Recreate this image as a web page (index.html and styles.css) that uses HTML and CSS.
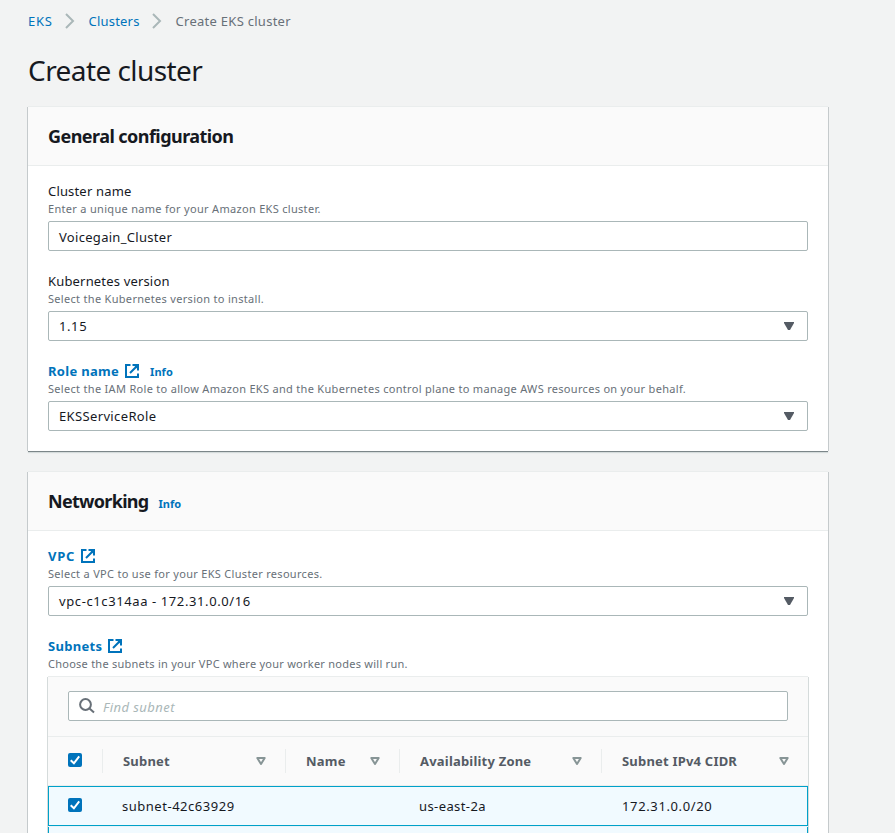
FILE: index.html
```html
<!DOCTYPE html>
<html lang="en">
<head>
<meta charset="utf-8">
<title>Create EKS cluster</title>
<link rel="stylesheet" href="styles.css">
</head>
<body>
<svg class="defs" aria-hidden="true">
  <symbol id="external" viewBox="0 0 16 16"><path d="M6.5 2H2v12h12v-3.5M12.5 3.5L6 10" fill="none" stroke="currentColor" stroke-width="2"/><path d="M8.5 1H15v6.5H13V5.5L10.5 3H8.5Z" fill="currentColor"/></symbol>
  <symbol id="chevron" viewBox="0 0 10 16"><path d="M1 1l7 7-7 7" fill="none" stroke="currentColor" stroke-width="2"/></symbol>
  <symbol id="caret" viewBox="0 0 10 8"><path d="M0 0H10V1L6 8H4L0 1Z" fill="currentColor"/></symbol>
  <symbol id="sort" viewBox="0 0 10 8"><path d="M1.3 1H8.7L5 7Z" fill="none" stroke="currentColor" stroke-width="2" stroke-linejoin="round"/></symbol>
  <symbol id="search" viewBox="0 0 16 16"><circle cx="6.5" cy="6.5" r="5.4" fill="none" stroke="currentColor" stroke-width="2"/><path d="M10.5 10.5l4.5 4" fill="none" stroke="currentColor" stroke-width="2"/></symbol>
  <symbol id="check" viewBox="0 0 14 14"><path d="M2.7 7.3l3.2 3L11.2 3.4" fill="none" stroke="#fff" stroke-width="2"/></symbol>
</svg>
<main class="page">
  <nav class="breadcrumbs">
    <a class="crumb-eks">EKS</a><svg class="chevron"><use href="#chevron"/></svg><a class="crumb-clusters">Clusters</a><svg class="chevron"><use href="#chevron"/></svg><span class="crumb-current">Create EKS cluster</span>
  </nav>
  <h1>Create cluster</h1>

  <section class="card">
    <header class="card-header"><h2>General configuration</h2></header>
    <div class="card-body">
      <div class="field">
        <div class="label">Cluster name</div>
        <div class="hint">Enter a unique name for your Amazon EKS cluster.</div>
        <div class="control">Voicegain_Cluster</div>
      </div>
      <div class="field">
        <div class="label">Kubernetes version</div>
        <div class="hint">Select the Kubernetes version to install.</div>
        <div class="control select numeric">1.15<svg class="caret"><use href="#caret"/></svg></div>
      </div>
      <div class="field">
        <div class="label link">Role name<svg class="external"><use href="#external"/></svg><a class="info">Info</a></div>
        <div class="hint">Select the IAM Role to allow Amazon EKS and the Kubernetes control plane to manage AWS resources on your behalf.</div>
        <div class="control select">EKSServiceRole<svg class="caret"><use href="#caret"/></svg></div>
      </div>
    </div>
  </section>

  <section class="card">
    <header class="card-header"><h2 class="networking">Networking</h2><a class="info">Info</a></header>
    <div class="card-body">
      <div class="field">
        <div class="label link vpc">VPC<svg class="external"><use href="#external"/></svg></div>
        <div class="hint">Select a VPC to use for your EKS Cluster resources.</div>
        <div class="control select numeric">vpc-c1c314aa - 172.31.0.0/16<svg class="caret"><use href="#caret"/></svg></div>
      </div>
      <div class="field">
        <div class="label link">Subnets<svg class="external"><use href="#external"/></svg></div>
        <div class="hint subnets-hint">Choose the subnets in your VPC where your worker nodes will run.</div>
        <div class="table">
          <div class="toolbar">
            <div class="control search"><svg class="magnifier"><use href="#search"/></svg><span class="placeholder">Find subnet</span></div>
          </div>
          <div class="row head">
            <div class="cell pick"><svg class="checkbox"><use href="#check"/></svg></div>
            <div class="cell">Subnet<svg class="sort"><use href="#sort"/></svg></div>
            <div class="cell">Name<svg class="sort"><use href="#sort"/></svg></div>
            <div class="cell">Availability Zone<svg class="sort"><use href="#sort"/></svg></div>
            <div class="cell">Subnet IPv4 CIDR<svg class="sort"><use href="#sort"/></svg></div>
          </div>
          <div class="row selected">
            <div class="cell pick"><svg class="checkbox"><use href="#check"/></svg></div>
            <div class="cell">subnet-42c63929</div>
            <div class="cell"></div>
            <div class="cell zone">us-east-2a</div>
            <div class="cell cidr">172.31.0.0/20</div>
          </div>
          <div class="row selected next"></div>
        </div>
      </div>
    </div>
  </section>
</main>
</body>
</html>
```
FILE: styles.css
```css
* { box-sizing: border-box; }
html { height: 100%; overflow: hidden; background: #fff; }
body {
  height: 833px;
  overflow: hidden;
  margin: 0;
  background: #f2f3f3;
  color: #16191f;
  font: 13px/20px "Noto Sans", sans-serif;
  letter-spacing: .3px;
}
svg { display: block; flex: none; }
.defs { position: absolute; width: 0; height: 0; }
.page { width: 804px; height: 833px; padding: 11px 2px 0; margin-left: 26px; overflow: hidden; }
.breadcrumbs { display: flex; align-items: center; height: 20px; color: #687078; }
.breadcrumbs a, .link, .info { color: #0073bb; }
.crumb-eks { letter-spacing: .7px; }
.crumb-clusters { letter-spacing: .2px; }
.chevron { width: 10px; height: 16px; margin: 0 14px 0 12px; color: #aab7b8; }
.crumb-current { letter-spacing: .27px; }
h1 { margin: 21px 0 19px; font-size: 28px; line-height: 36px; font-weight: 400; letter-spacing: -.57px; }
h2 { margin: 0; font-size: 18px; line-height: 22px; font-weight: 700; letter-spacing: -.55px; }
h2.networking { letter-spacing: -.7px; }
.card {
  margin-bottom: 21px;
  background: #fff;
  box-shadow: 0 -1px 0 #eaeded, -1px 0 0 #c5cacc, 1px 0 0 #c5cacc, 0 1px 0 #7c8689, 0 2px 1px #d5dbdb;
}
.card-header { display: flex; align-items: center; height: 59px; padding: 0 20px; background: #fafafa; border-bottom: 1px solid #eaeded; }
.card-body { padding: 15px 20px 20px; }
.field + .field { margin-top: 20px; }
.label { display: flex; align-items: center; height: 20px; letter-spacing: .17px; }
.link { font-weight: 700; letter-spacing: .3px; }
.vpc { letter-spacing: .7px; }
.external { width: 16px; height: 16px; margin-left: 5px; }
.info { font-size: 11px; font-weight: 700; margin-left: 10px; padding-top: 2px; letter-spacing: .05px; }
.card-header .info { padding-top: 5px; }
.hint { height: 16px; margin-bottom: 4px; font-size: 11px; line-height: 16px; color: #687078; white-space: nowrap; letter-spacing: .305px; }
.subnets-hint { letter-spacing: .25px; }
.control {
  display: flex; align-items: center; justify-content: space-between;
  height: 30px; padding: 1px 13px 0 10px;
  background: #fff; border: 1px solid #aab7b8; border-radius: 2px;
}
.select { padding-bottom: 1px; letter-spacing: .36px; }
.numeric { letter-spacing: .6px; }
.caret { width: 10px; height: 8px; color: #545b64; margin-top: -1px; }
.table { background: #fafafa; box-shadow: 0 -1px 0 #eaeded, -1px 0 0 #d5dbdb, 1px 0 0 #d5dbdb; margin-top: 5px; }
.toolbar { height: 60px; padding: 14px 20px 15px; border-bottom: 1px solid #eaeded; }
.search { justify-content: flex-start; padding-top: 2px; }
.magnifier { width: 16px; height: 16px; color: #687078; margin-top: -2px; }
.placeholder { margin-left: 8px; color: #aab7b8; font-style: italic; letter-spacing: .45px; }
.row { display: grid; grid-template-columns: 54px 183px 114px 202px 207px; }
.head { height: 49px; padding: 12px 0; border-bottom: 1px solid #eaeded; color: #545b64; font-weight: 700; letter-spacing: .2px; }
.cell { display: flex; align-items: center; justify-content: space-between; padding: 0 19px 0 20px; }
.head .cell + .cell { border-left: 1px solid #eaeded; }
.cell.pick { padding: 0 0 2px 20px; }
.sort { width: 10px; height: 8px; color: #879596; }
.checkbox { width: 14px; height: 14px; background: #0073bb; border-radius: 2px; }
.selected { height: 40px; background: #f1faff; box-shadow: inset 0 0 0 1px #00a1c9; letter-spacing: .52px; }
.zone { letter-spacing: .4px; }
.cidr { letter-spacing: .63px; padding-left: 21px; }
.next { height: 8px; border-top: 1px solid #eaf3f8; box-shadow: inset 1px 0 #00a1c9, inset -1px 0 #00a1c9; }
```
